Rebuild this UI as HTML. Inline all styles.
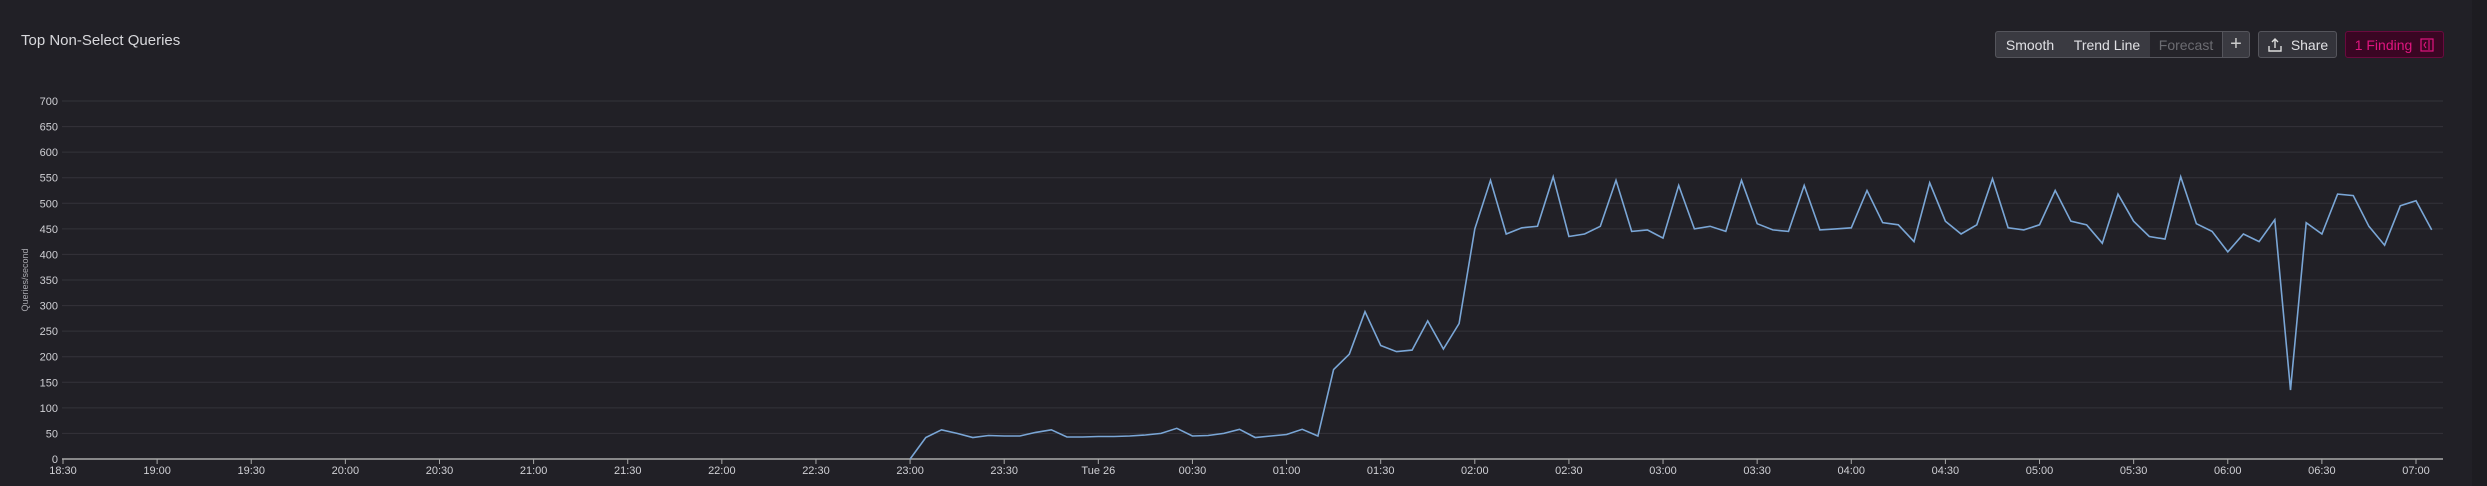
<!DOCTYPE html>
<html><head><style>
body{margin:0;width:2487px;height:486px;background:#212026;overflow:hidden;font-family:"Liberation Sans","DejaVu Sans",sans-serif;position:relative}
.t{position:absolute;left:21px;top:32px;color:#d8d8dc;font-size:15px}
.b{position:absolute;top:31px;height:27px;box-sizing:border-box;color:#e0e0e4;font-size:14px;display:flex;align-items:center;justify-content:center;border:1px solid #55555c;background:#3a3a41}
.edge{position:absolute;left:2472px;top:0;width:15px;height:486px;background:#1d1c21}
</style></head><body>
<div class="t">Top Non-Select Queries</div>
<div class="b" style="left:1995px;width:70px;border-radius:3px 0 0 3px">Smooth</div>
<div class="b" style="left:2064px;width:87px;border-left:none">Trend Line</div>
<div class="b" style="left:2150px;width:73px;background:#25242a;color:#6c6c72;border-left:none">Forecast</div>
<div class="b" style="left:2222px;width:28px;border-radius:0 3px 3px 0;font-size:20px;color:#ccc">+</div>
<div class="b" style="left:2258px;width:79px;border-radius:3px;background:#34343b"><svg width="16" height="16" viewBox="0 0 16 16" style="margin-right:8px"><path d="M2 9v5h12V9M8 2v9M5 5l3-3 3 3" fill="none" stroke="#ddd" stroke-width="1.4"/></svg>Share</div>
<div class="b" style="left:2345px;width:99px;border-radius:3px;background:#3a0623;border-color:#6a0a3e;color:#e0157f">1 Finding<svg width="14" height="14" viewBox="0 0 14 14" style="margin-left:8px"><rect x="1" y="1" width="12" height="12" fill="none" stroke="#e0157f" stroke-width="1.2"/><path d="M6 4L4 7l2 3M9 2v10" fill="none" stroke="#e0157f" stroke-width="1.1"/></svg></div>
<div class="edge"></div>
<svg id="c" width="2487" height="486" style="position:absolute;left:0;top:0" font-family="Liberation Sans, sans-serif"></svg>
<script>
var s='',X0=63,K=(2416-63)/750,Y0=459,KY=(459-101)/700;
for(var v=0;v<=700;v+=50){var y=Y0-v*KY;if(v>0)s+='<line x1="62" x2="2443" y1="'+y+'" y2="'+y+'" stroke="#34333a" stroke-width="1"/>';s+='<text x="58" y="'+(y+4)+'" text-anchor="end" fill="#cfcfd4" font-size="11">'+v+'</text>';}
s+='<line x1="62" x2="2443" y1="459" y2="459" stroke="#aaa" stroke-width="1.5"/>';
var labs=['18:30','19:00','19:30','20:00','20:30','21:00','21:30','22:00','22:30','23:00','23:30','Tue 26','00:30','01:00','01:30','02:00','02:30','03:00','03:30','04:00','04:30','05:00','05:30','06:00','06:30','07:00'];
for(var i=0;i<labs.length;i++){var x=X0+i*30*K;s+='<line x1="'+x+'" x2="'+x+'" y1="459" y2="464" stroke="#aaa"/><text x="'+x+'" y="474" text-anchor="middle" fill="#cfcfd4" font-size="11">'+labs[i]+'</text>';}
s+='<text transform="translate(28,280) rotate(-90)" text-anchor="middle" fill="#a8a8ae" font-size="9">Queries/second</text>';
var d=[0,42,57,50,42,46,45,45,52,57,43,43,44,44,45,47,50,60,45,46,50,58,42,45,48,58,45,175,205,288,222,210,213,270,215,265,450,545,440,452,455,552,435,440,455,545,445,448,432,535,450,455,445,545,460,448,445,535,448,450,452,525,462,458,425,540,465,440,458,548,452,448,458,525,465,458,422,518,465,435,430,552,460,445,405,440,425,468,135,462,440,518,515,455,418,495,505,448];
var p=[];for(var i=0;i<d.length;i++)p.push((X0+(270+i*5)*K).toFixed(1)+','+(Y0-d[i]*KY).toFixed(1));
s+='<polyline points="'+p.join(' ')+'" fill="none" stroke="#7aa6d6" stroke-width="1.6"/>';
document.getElementById('c').innerHTML=s;
</script>
</body></html>
